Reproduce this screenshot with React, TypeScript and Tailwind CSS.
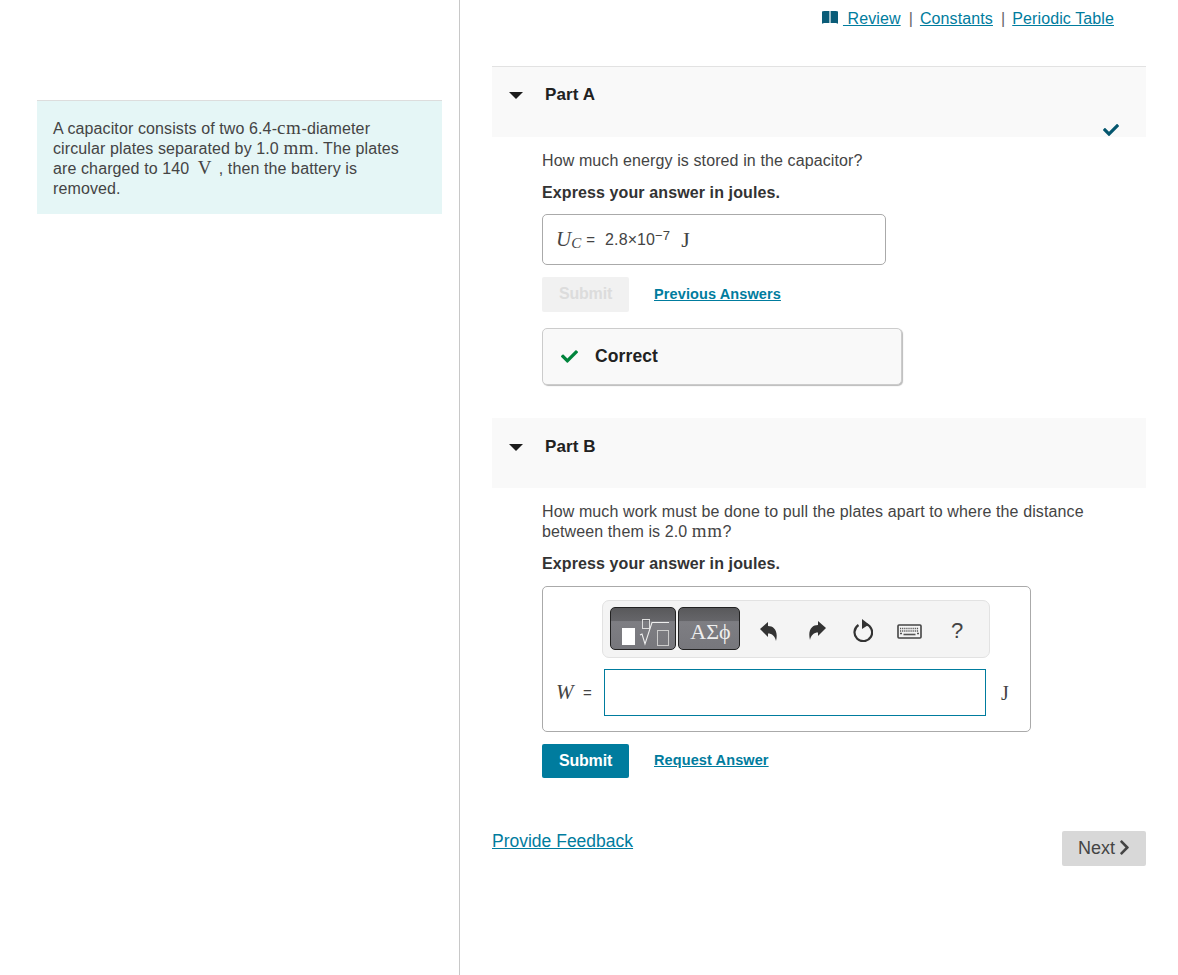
// Mastering-style problem page
import { FaCheck, FaChevronRight } from 'react-icons/fa';

const link = 'text-[#007c9e] underline';
const serif = "font-['Liberation_Serif',serif] tracking-normal leading-none";
// inline units in running text, line-height 0 so they don't push the line box
const unit = "font-['Liberation_Serif',serif] text-[19px] tracking-[0.6px] leading-[0]";
const tmplBtn =
  'mb-[2px] h-[43px] rounded-[5px] border border-[#222] bg-[linear-gradient(#59595b_0,#66666a_32%,#7e7e83_33%,#77777c_100%)]';

function Caret() {
  return (
    <svg width="14" height="7" viewBox="0 0 14 7" className="shrink-0">
      <path d="M0 0 H14 L7 7 Z" fill="#1c1c1c" />
    </svg>
  );
}

function PartHeader({ title, top }: { title: string; top: string }) {
  return (
    <div className="h-[70px] bg-[#f9f9f9] pl-[17px]">
      <div className={`flex items-center ${top}`}>
        <Caret />
        <span className="ml-[22px] font-bold text-[17px] text-[#212121]">{title}</span>
      </div>
    </div>
  );
}

function BookIcon() {
  return (
    <svg width="16" height="13" viewBox="0 0 16 13" className="mt-[2px] shrink-0">
      <path d="M0 0.5 L2 0 H7.4 V12 H2 L0 12.8 Z" fill="#0a5c78" />
      <path d="M16 0.5 L14 0 H8.6 V12 H14 L16 12.8 Z" fill="#0a5c78" />
    </svg>
  );
}

function TemplateIcon() {
  return (
    <svg width="64" height="41" viewBox="0 0 64 41">
      <rect x="11" y="20" width="13" height="17" fill="#fff" />
      <rect x="31.5" y="11.5" width="7" height="9" fill="none" stroke="#ddd" strokeWidth="1" />
      <path d="M29 27 L31 26 L34 36 L41 14.5 H58" fill="none" stroke="#eee" strokeWidth="1.1" />
      <rect x="46.5" y="22.5" width="11" height="15" fill="none" stroke="#ccc" strokeWidth="1" />
    </svg>
  );
}

function UndoIcon({ flip }: { flip?: boolean }) {
  return (
    <svg width="18" height="19" viewBox="0 0 18 19" className={flip ? '-scale-x-100' : ''}>
      <path d="M0 7 L8 0 V4 C14 4 18.5 9 16 19 C15 14 12 11.5 8 11.5 V15 Z" fill="#333" />
    </svg>
  );
}

function ResetIcon() {
  return (
    <svg width="20" height="23" viewBox="0 0 20 23">
      <path d="M5.5 6 A8.8 8.8 0 1 0 13 5" fill="none" stroke="#333" strokeWidth="2.2" />
      <path d="M9 0 L16 5.5 L9 10 Z" fill="#333" />
    </svg>
  );
}

function KeyboardIcon() {
  return (
    <svg width="25" height="15" viewBox="0 0 25 15">
      <rect x="1" y="1" width="23" height="13" rx="1" fill="#f4f4f4" stroke="#444" strokeWidth="1.6" />
      <path d="M3 4.5 H22 M3 7 H22" stroke="#555" strokeWidth="1.3" strokeDasharray="1.2 0.9" />
      <path d="M3 9.5 H5 M20 9.5 H22" stroke="#555" strokeWidth="1.3" />
      <path d="M6.5 10.5 H18.5" stroke="#555" strokeWidth="1.6" />
    </svg>
  );
}

export default function App() {
  return (
    <div className="flex min-h-[975px] bg-white font-['Liberation_Sans',sans-serif] text-[16px] leading-5 tracking-[0.11px] text-[#444]">
      {/* left pane */}
      <div className="w-[460px] shrink-0 border-r border-[#c8c8c8] pl-[37px] pr-[17px] pt-[100px]">
        <div className="h-[114px] border-t border-[#dddddd] bg-[#e5f6f6] px-4 pt-[18px]">
          <div className="h-5">A capacitor consists of two 6.4-<span className={unit}>cm</span>-diameter</div>
          <div className="h-5">circular plates separated by 1.0 <span className={unit}>mm</span>. The plates</div>
          <div className="h-5">are charged to 140 <span className={`${unit} ml-1 mr-0.5`}>V</span> , then the battery is</div>
          <div className="h-5">removed.</div>
        </div>
      </div>

      {/* right pane */}
      <div className="relative ml-8 w-[654px]">
        <div className="flex h-[66px] items-start justify-end pr-8 pt-[9px] text-[#666]">
          <BookIcon />
          <a className={`${link} ml-[5px]`}>&nbsp;Review</a>
          <span className="ml-2 mr-[7px]">|</span>
          <a className={link}>Constants</a>
          <span className="ml-2 mr-[7px]">|</span>
          <a className={link}>Periodic Table</a>
        </div>

        <div className="relative border-t border-[#e2e2e2]">
          <PartHeader title="Part A" top="pt-[18px]" />
          <FaCheck className="absolute right-[27px] top-[55px] text-[#04566e]" size={16} />
        </div>

        <div className="pl-[50px]">
          <p className="mt-[14px]">How much energy is stored in the capacitor?</p>
          <p className="mt-3 font-bold text-[#333]">Express your answer in joules.</p>

          <div className="mt-[11px] flex h-[51px] w-[344px] items-center rounded-[5px] border border-[#aaaaaa] pl-[13px]">
            <span className={`${serif} italic text-[21px]`}>U</span>
            <span className={`${serif} italic text-[15px] mt-[7px]`}>C</span>
            <span className="ml-[5px] text-[15px]">=</span>
            <span className="ml-[10px]">2.8×10</span>
            <span className="mt-[-8px] text-[13px]">−7</span>
            <span className={`${serif} ml-[11px] text-[22px]`}>J</span>
          </div>

          <div className="mt-3 flex items-center">
            <button className="h-[35px] w-[87px] rounded-[2px] bg-[#f1f1f1] pb-0.5 font-bold tracking-[-0.2px] text-[#dcdcdc]">Submit</button>
            <a className={`${link} ml-[25px] mt-[-2px] text-[14.5px] font-bold`}>Previous Answers</a>
          </div>

          <div className="mt-4 flex h-[57px] w-[360px] items-center rounded-[5px] border border-[#cccccc] bg-[#f9f9f9] pl-[18px] shadow-[1px_1px_1px_#bbbbbb]">
            <FaCheck className="text-[#00843c]" size={17} />
            <span className="mb-0.5 ml-[17px] font-bold text-[17.5px] text-[#222]">Correct</span>
          </div>
        </div>

        <div className="mt-[33px]">
          <PartHeader title="Part B" top="pt-[19px]" />
        </div>

        <div className="pl-[50px]">
          <div className="mt-[13px] pt-px">
            <div className="h-5">How much work must be done to pull the plates apart to where the distance</div>
            <div className="h-5">between them is 2.0 <span className={unit}>mm</span>?</div>
          </div>
          <p className="mt-3 font-bold text-[#333]">Express your answer in joules.</p>

          <div className="mt-3 h-[146px] w-[489px] rounded-[5px] border border-[#aaaaaa] pl-[13px] pt-[13px]">
            <div className="ml-[46px] flex h-[58px] w-[388px] items-center rounded-[7px] border border-[#e2e2e2] bg-[#f4f4f4] pl-[7px]">
              <div className={`${tmplBtn} w-[66px] overflow-hidden`}>
                <TemplateIcon />
              </div>
              <div className={`${tmplBtn} ml-0.5 flex w-[62px] items-center justify-center pl-[3px] pt-[7px] text-[22px] ${serif} text-[#eeeeee]`}>
                ΑΣϕ
              </div>
              <div className="ml-[20px] mt-[4px]"><UndoIcon /></div>
              <div className="ml-[30px] mt-[3px]"><UndoIcon flip /></div>
              <div className="ml-[27px] mt-[3px]"><ResetIcon /></div>
              <div className="ml-[24px] mt-[5px]"><KeyboardIcon /></div>
              <span className="ml-[29px] mt-[4px] text-[22px]">?</span>
            </div>
            <div className="mt-[11px] flex items-center">
              <div className="flex w-[48px] items-center">
                <span className={`${serif} w-[27px] italic text-[21px]`}>W</span>
                <span className="text-[15px]">=</span>
              </div>
              <div className="h-[47px] w-[382px] border border-[#007c9e] bg-white" />
              <span className={`${serif} ml-[15px] text-[20px]`}>J</span>
            </div>
          </div>

          <div className="mt-3 flex items-center">
            <button className="h-[34px] w-[87px] rounded-[2px] bg-[#007c9e] font-bold tracking-[-0.2px] text-white">Submit</button>
            <a className={`${link} ml-[25px] mt-[-2px] text-[14.5px] font-bold`}>Request Answer</a>
          </div>
        </div>

        <div className="mt-[53px] flex items-start justify-between">
          <a className={`${link} text-[17.5px] tracking-normal`}>Provide Feedback</a>
          <button className="flex h-[35px] w-[84px] items-center rounded-[2px] bg-[#d8d8d8] pb-0.5 pl-4 text-[18px] tracking-normal text-[#444]">
            Next
            <FaChevronRight className="ml-px text-[#444]" size={17} />
          </button>
        </div>
      </div>
    </div>
  );
}
